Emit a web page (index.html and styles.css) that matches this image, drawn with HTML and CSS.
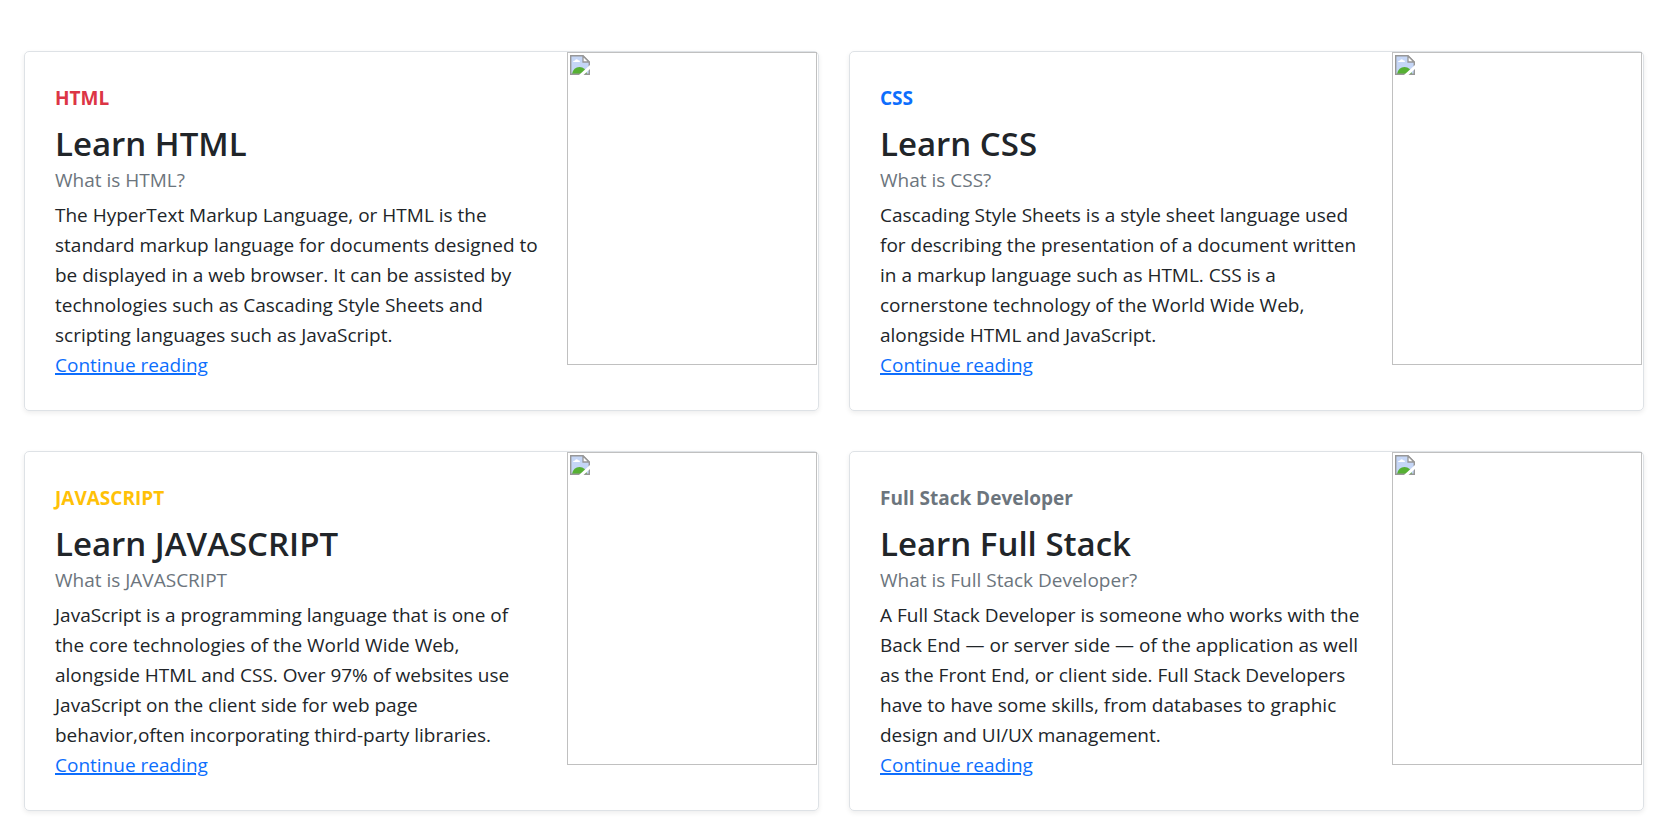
FILE: index.html
```html
<!DOCTYPE html>
<html lang="en">
<head>
<meta charset="utf-8">
<meta name="viewport" content="width=device-width, initial-scale=1">
<title>Learn Web Development</title>
<link rel="stylesheet" href="styles.css">
</head>
<body>
<svg class="sprite" aria-hidden="true">
  <symbol id="picture" viewBox="0 0 20 20">
    <path d="M1 1H13L19 7V19H1Z" fill="#c5d6f6"/>
    <path d="M3 7Q3 5.500 5 5.500Q6 3.500 7.500 4.500Q8 5.500 9.500 5.500Q10.500 7 9.500 7Z" fill="#fff"/>
    <path d="M2 19Q3.500 12 9.500 12Q15.500 12 17 19Z" fill="#56b033"/>
    <path d="M0.700 0.700H13L19.300 7V19.300H0.700Z" fill="none" stroke="#979797" stroke-width="1.400"/>
    <path d="M13 1V7H19Z" fill="#fff" stroke="#979797" stroke-width="1.300"/>
    <path d="M20 10V14L13.500 20H9Z" fill="#fff"/>
  </symbol>
</svg>
<main class="grid">
  <article class="card">
    <div class="card-body">
      <strong class="tag tag-red">HTML</strong>
      <h3 class="title">Learn HTML</h3>
      <div class="question">What is HTML?</div>
      <p class="text">The HyperText Markup Language, or HTML is the standard markup language for documents designed to be displayed in a web browser. It can be assisted by technologies such as Cascading Style Sheets and scripting languages such as JavaScript.</p>
      <a class="link" href="#">Continue reading</a>
    </div>
    <div class="thumb"><svg class="thumb-icon" aria-hidden="true"><use href="#picture"/></svg></div>
  </article>
  <article class="card">
    <div class="card-body">
      <strong class="tag tag-blue">CSS</strong>
      <h3 class="title">Learn CSS</h3>
      <div class="question">What is CSS?</div>
      <p class="text">Cascading Style Sheets is a style sheet language used for describing the presentation of a document written in a markup language such as HTML. CSS is a cornerstone technology of the World Wide Web, alongside HTML and JavaScript.</p>
      <a class="link" href="#">Continue reading</a>
    </div>
    <div class="thumb"><svg class="thumb-icon" aria-hidden="true"><use href="#picture"/></svg></div>
  </article>
  <article class="card">
    <div class="card-body">
      <strong class="tag tag-yellow">JAVASCRIPT</strong>
      <h3 class="title">Learn JAVASCRIPT</h3>
      <div class="question">What is JAVASCRIPT</div>
      <p class="text">JavaScript is a programming language that is one of the core technologies of the World Wide Web, alongside HTML and CSS. Over 97% of websites use JavaScript on the client side for web page behavior,often incorporating third-party libraries.</p>
      <a class="link" href="#">Continue reading</a>
    </div>
    <div class="thumb"><svg class="thumb-icon" aria-hidden="true"><use href="#picture"/></svg></div>
  </article>
  <article class="card">
    <div class="card-body">
      <strong class="tag tag-gray">Full Stack Developer</strong>
      <h3 class="title">Learn Full Stack</h3>
      <div class="question">What is Full Stack Developer?</div>
      <p class="text">A Full Stack Developer is someone who works with the Back End — or server side — of the application as well as the Front End, or client side. Full Stack Developers have to have some skills, from databases to graphic design and UI/UX management.</p>
      <a class="link" href="#">Continue reading</a>
    </div>
    <div class="thumb"><svg class="thumb-icon" aria-hidden="true"><use href="#picture"/></svg></div>
  </article>
</main>
</body>
</html>
```
FILE: styles.css
```css
*, *::before, *::after { box-sizing: border-box; }

body {
  margin: 0;
  background: #fff;
  color: #212529;
  font-family: "Segoe UI", "Open Sans", "Noto Sans", sans-serif;
  font-size: 19px;
  line-height: 30px;
}

.sprite {
  position: absolute;
  width: 0;
  height: 0;
}

.grid {
  display: grid;
  grid-template-columns: repeat(auto-fit, minmax(600px, 1fr));
  gap: 40px 30px;
  padding: 51px 21px 24px 24px;
}

.card {
  display: flex;
  align-items: flex-start;
  border: 1px solid #dee2e6;
  border-radius: 5px;
  box-shadow: 0 2px 5px rgba(0, 0, 0, 0.075);
}

.card-body {
  display: flex;
  flex: 1;
  flex-direction: column;
  align-items: flex-start;
  min-width: 0;
  padding: 31px 27px 30px 30px;
}

.tag { margin-bottom: 10px; font-weight: 700; }
.tag-red { color: #dc3545; }
.tag-blue { color: #0d6efd; }
.tag-yellow { color: #ffc107; }
.tag-gray { color: #6c757d; }

.title {
  margin: 0;
  font-size: 33px;
  font-weight: 600;
  line-height: 42px;
}

.question {
  margin-bottom: 5px;
  color: #6c757d;
}

.text { margin: 0; }

.link {
  color: #0d6efd;
  text-decoration-thickness: 2px;
}

.thumb {
  flex: none;
  width: 250px;
  height: 313px;
  margin-right: 1px;
  padding: 2px;
  border: 1px solid #c0c0c0;
}

.thumb-icon {
  display: block;
  width: 20px;
  height: 20px;
}
```
